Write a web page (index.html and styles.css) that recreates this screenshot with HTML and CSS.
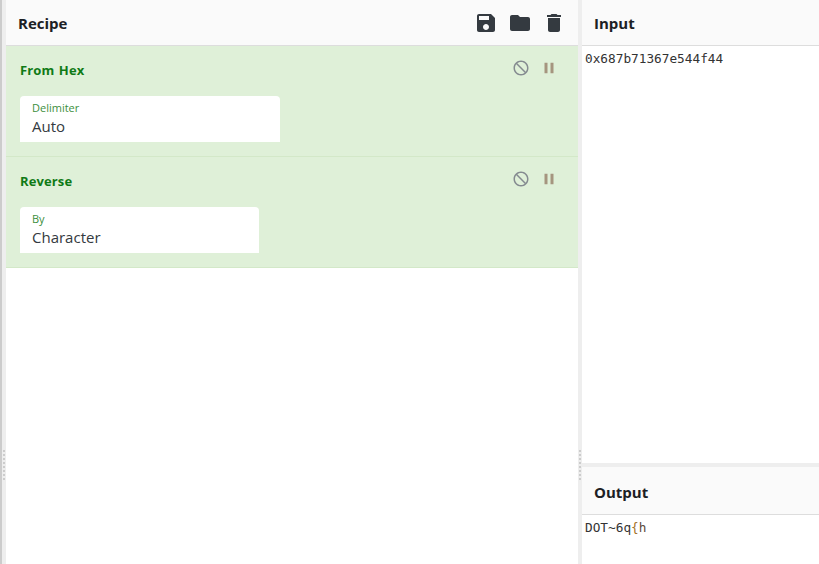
FILE: index.html
```html
<!DOCTYPE html>
<html lang="en">
<head>
<meta charset="utf-8">
<title>CyberChef</title>
<link rel="stylesheet" href="styles.css">
</head>
<body>
<div class="app">
  <div class="edge"><div class="grip"><i></i><i></i><i></i><i></i><i></i><i></i><i></i><i></i></div></div>
  <section class="recipe">
    <header class="title-bar">
      <h1>Recipe</h1>
      <div class="tools">
        <svg class="tool" viewBox="0 0 24 24"><path d="M17 3H5c-1.11 0-2 .9-2 2v14c0 1.1.89 2 2 2h14c1.1 0 2-.9 2-2V7l-4-4zm-5 16c-1.66 0-3-1.34-3-3s1.34-3 3-3 3 1.34 3 3-1.34 3-3 3zm3-10H5V5h10v4z"/></svg>
        <svg class="tool" viewBox="0 0 24 24"><path d="M10 4H4c-1.1 0-1.99.9-1.99 2L2 18c0 1.1.9 2 2 2h16c1.1 0 2-.9 2-2V8c0-1.1-.9-2-2-2h-8l-2-2z"/></svg>
        <svg class="tool" viewBox="0 0 24 24"><path d="M6 19c0 1.1.9 2 2 2h8c1.1 0 2-.9 2-2V7H6v12zM19 4h-3.5l-1-1h-5l-1 1H5v2h14V4z"/></svg>
      </div>
    </header>
    <article class="op">
      <div class="op-head">
        <h2>From Hex</h2>
        <div class="op-tools">
          <svg class="ban" viewBox="0 0 24 24"><path d="M12 2C6.47 2 2 6.47 2 12s4.47 10 10 10 10-4.47 10-10S17.53 2 12 2zm0 18c-4.41 0-8-3.59-8-8 0-1.85.63-3.55 1.69-4.9L16.9 18.31C15.55 19.37 13.85 20 12 20zm6.31-3.1L7.1 5.69C8.45 4.63 10.15 4 12 4c4.41 0 8 3.59 8 8 0 1.85-.63 3.55-1.69 4.9z"/></svg>
          <svg class="pause" viewBox="0 0 24 24"><path d="M6 19h4V5H6v14zm8-14v14h4V5h-4z"/></svg>
        </div>
      </div>
      <div class="field wide"><label>Delimiter</label><div class="value">Auto</div></div>
    </article>
    <article class="op">
      <div class="op-head">
        <h2>Reverse</h2>
        <div class="op-tools">
          <svg class="ban" viewBox="0 0 24 24"><path d="M12 2C6.47 2 2 6.47 2 12s4.47 10 10 10 10-4.47 10-10S17.53 2 12 2zm0 18c-4.41 0-8-3.59-8-8 0-1.85.63-3.55 1.69-4.9L16.9 18.31C15.55 19.37 13.85 20 12 20zm6.31-3.1L7.1 5.69C8.45 4.63 10.15 4 12 4c4.41 0 8 3.59 8 8 0 1.85-.63 3.55-1.69 4.9z"/></svg>
          <svg class="pause" viewBox="0 0 24 24"><path d="M6 19h4V5H6v14zm8-14v14h4V5h-4z"/></svg>
        </div>
      </div>
      <div class="field narrow"><label>By</label><div class="value">Character</div></div>
    </article>
  </section>
  <div class="gutter"><div class="grip"><i></i><i></i><i></i><i></i><i></i><i></i><i></i><i></i></div></div>
  <section class="io">
    <div class="input">
      <header class="title-bar"><h1>Input</h1></header>
      <pre class="code">0x687b71367e544f44</pre>
    </div>
    <div class="output">
      <header class="title-bar out-bar"><h1>Output</h1></header>
      <pre class="code out-code">DOT~6q<span class="brace">{</span><span class="tail">h</span></pre>
    </div>
  </section>
</div>
</body>
</html>
```
FILE: styles.css
```css
* { box-sizing: border-box; }
html, body { margin: 0; height: 100%; background: #fff; overflow: hidden; }
body { font-family: "Open Sans", "Noto Sans", sans-serif; color: #212529; }
.app { display: flex; height: 564px; }
.edge { width: 6px; flex: none; background: #eee; border-left: 2px solid #ccc; position: relative; }
.edge .grip { left: 1px; }
.gutter { width: 4px; flex: none; background: #eee; position: relative; }
.gutter .grip { left: 1px; }
.grip { position: absolute; top: 450px; display: flex; flex-direction: column; gap: 2px; }
.grip i { display: block; width: 2px; height: 2px; background: #ccc; }
.recipe { width: 572px; flex: none; }
.io { flex: 1; min-width: 0; display: flex; flex-direction: column; }
.title-bar { height: 46px; background: #fafafa; border-bottom: 1px solid #ddd; display: flex; align-items: center; justify-content: space-between; padding-left: 12px; }
.title-bar h1 { margin: 0; font-size: 15px; font-weight: 700; line-height: 20px; color: #1c2024; }
.tools { display: flex; gap: 10px; padding-right: 12px; }
.tool { width: 24px; height: 24px; fill: #343a40; display: block; }
.op { height: 111px; background: #dff0d8; border-bottom: 1px solid #d3e8c8; padding: 0 14px; }
.op-head { height: 50px; display: flex; justify-content: space-between; }
.op-head h2 { margin: 15px 0 0; font-size: 13px; line-height: 18px; font-weight: 700; color: #0f7a16; letter-spacing: .12px; word-spacing: 1px; }
.op-tools { display: flex; align-items: flex-start; gap: 10px; padding: 13px 6px 0 0; }
.ban { width: 18px; height: 18px; fill: #858b90; display: block; }
.pause { width: 18px; height: 18px; fill: #a5957f; display: block; }
.field { height: 46px; background: #fff; border-radius: 4px 4px 0 0; padding: 4px 12px 0; }
.field.wide { width: 260px; }
.field.narrow { width: 239px; }
.field label { display: block; font-size: 11px; line-height: 15px; color: #3d8f3d; }
.field .value { font-size: 15px; line-height: 20px; margin-top: 1px; color: #343a40; }
.input { flex: 1; min-height: 0; }
.output { height: 101px; border-top: 4px solid #eee; }
.out-bar { height: 48px; padding-top: 2px; }
.code { margin: 0; padding: 5px 3px 0; font-family: "DejaVu Sans Mono", monospace; font-size: 12.75px; line-height: 15px; color: #333; }
.brace { color: #a5742a; }
.tail { color: #5c4a3a; }
```
